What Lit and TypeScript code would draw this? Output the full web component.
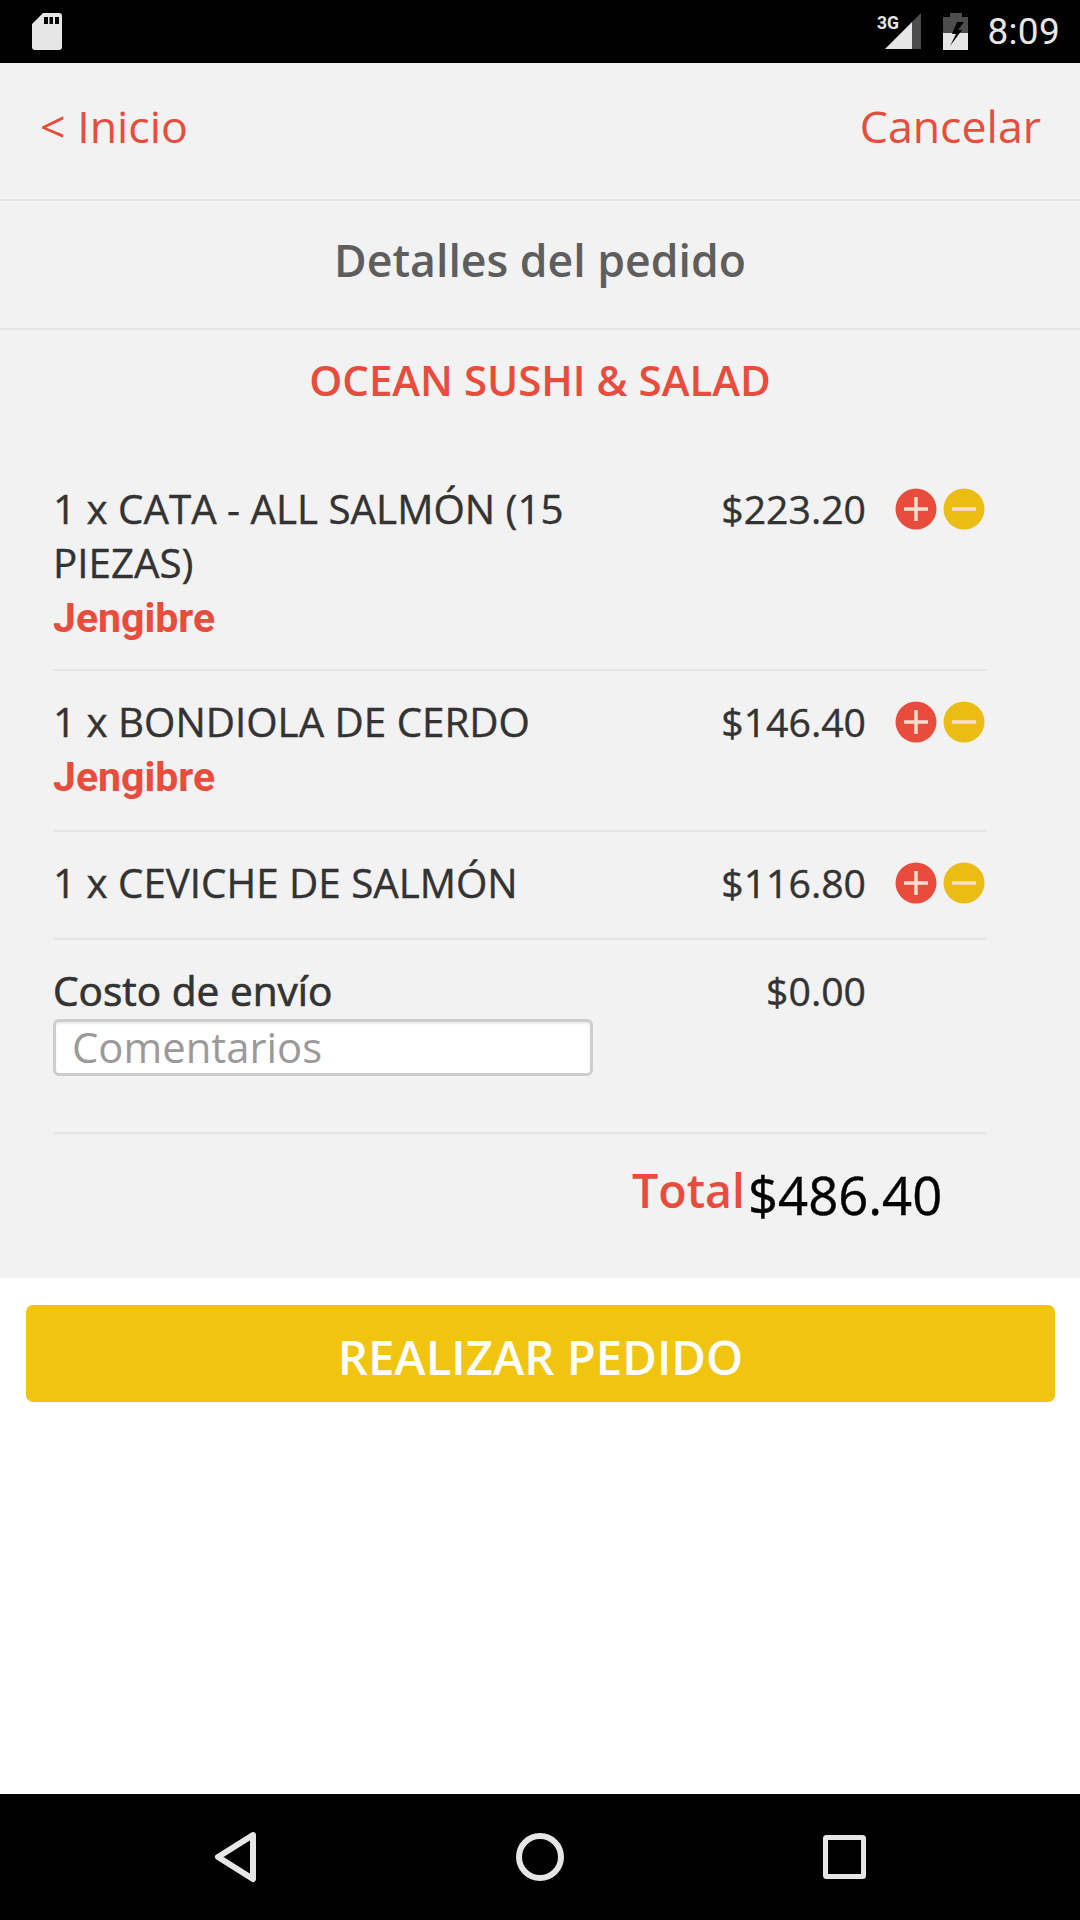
import { LitElement, html, css } from "lit";
import { customElement } from "lit/decorators.js";

@customElement("app-root")
export class AppRoot extends LitElement {
  static styles = css`
    :host { display: block; width: 1080px; height: 1920px; background: #fff; font-family: "Open Sans", "Noto Sans", sans-serif; overflow: hidden; }
    * { box-sizing: border-box; }
    .page { display: flex; flex-direction: column; height: 1920px; }
    .status { height: 63px; background: #000; display: flex; align-items: center; padding: 0 20px 0 32px; color: #e6e6e6; flex: none; }
    .status .sp { flex: 1; }
    .status svg { display: block; flex: none; }
    .time { font-family: Roboto, sans-serif; font-size: 37px; margin-left: 19px; line-height: 63px; letter-spacing: 0.3px; }
    .net { margin-right: 22px; }
    .gray { background: #f2f2f2; height: 1215px; flex: none; display: flex; flex-direction: column; }
    .top { height: 138px; border-bottom: 2px solid #e4e4e4; display: flex; justify-content: space-between; align-items: center; padding: 0 39px 10px 40px; color: #e74c3c; font-size: 44.7px; line-height: 60px; }
    .title { height: 129px; border-bottom: 2px solid #e4e4e4; display: flex; align-items: center; justify-content: center; padding-bottom: 10px; font-size: 44.6px; font-weight: 600; color: #5e5e5e; }
    .rest { text-align: center; font-size: 42px; font-weight: 600; color: #e74c3c; line-height: 52px; margin-top: 24px; }
    .list { margin: 0 93px 0 53px; padding-top: 76px; }
    .row { display: flex; border-bottom: 2px solid #e4e4e4; margin-bottom: 24px; }
    .r1 { padding-bottom: 23px; }
    .r2 { padding-bottom: 25px; }
    .r3 { padding-bottom: 28px; }
    .name { width: 545px; font-size: 40.3px; font-weight: 500; color: #333; line-height: 54px; flex: none; -webkit-text-stroke: 0.4px #333; }
    .price { width: 268px; text-align: right; font-size: 39.2px; font-weight: 500; color: #333; line-height: 54px; flex: none; -webkit-text-stroke: 0.4px #333; }
    .jen { color: #e74c3c; font-weight: 700; font-size: 41px; line-height: 56px; font-family: Roboto, sans-serif; -webkit-text-stroke: 0; }
    .btns { display: flex; margin-left: 29px; height: 42px; margin-top: 6px; gap: 6px; flex: none; }
    .btns svg { display: block; filter: blur(0.5px); }
    .ship { height: 170px; margin-bottom: 0; }
    .cost { font-size: 40.6px; -webkit-text-stroke: 0.7px #333; }
    .input { width: 540px; height: 57px; border: 3px solid #cdcdcd; border-radius: 6px; background: #fff; color: #9a9a9a; font-size: 41.8px; line-height: 50px; padding-left: 16px; margin-top: 1px; box-shadow: inset 0 2px 2px #eee; font-weight: 400; -webkit-text-stroke: 0; }
    .total { display: flex; align-items: baseline; margin-top: 18px; padding-left: 579px; }
    .tl { font-size: 46.5px; font-weight: 600; color: #e74c3c; }
    .tv { font-size: 52.6px; font-weight: 500; color: #000; position: relative; top: 7px; margin-left: 3px; -webkit-text-stroke: 0.4px #000; }
    .cta { margin: 27px 25px 0 26px; height: 97px; background: #f1c40f; border-radius: 7px; color: #fff; font-size: 47.3px; font-weight: 600; display: flex; align-items: center; justify-content: center; flex: none; }
    .cta span { position: relative; top: 3px; }
    .fill { flex: 1; }
    .nav { height: 126px; background: #000; flex: none; display: block; width: 1080px; }
  `;

  btn(bg: string, plus: boolean) {
    return html`<svg width="42" height="42" viewBox="0 0 42 42">
      <circle cx="21" cy="21" r="20.5" fill=${bg}></circle>
      <path d=${plus ? "M9 21H33M21 9V33" : "M9 21H33"} stroke="#f8ddd0" stroke-width="3.5" fill="none"></path>
    </svg>`;
  }

  row(cls: string, name: string, price: string, extra: boolean) {
    return html`<div class="row ${cls}">
      <div class="name">${name}${extra ? html`<div class="jen">Jengibre</div>` : ""}</div>
      <div class="price">${price}</div>
      <div class="btns">${this.btn("#e74c3c", true)}${this.btn("#ebbc14", false)}</div>
    </div>`;
  }

  render() {
    return html`<div class="page">
      <div class="status">
        <svg width="30" height="37" viewBox="0 0 30 37">
          <path fill-rule="evenodd" fill="#e6e6e6" d="M11 0H27a3 3 0 0 1 3 3V34a3 3 0 0 1-3 3H3a3 3 0 0 1-3-3V11Z M12 4v7h4V4Z M17.5 4v7h3.5V4Z M23 4v7h4V4Z"></path>
        </svg>
        <div class="sp"></div>
        <svg class="net" width="44" height="63" viewBox="0 -13 44 63">
          <path fill="#e6e6e6" d="M8 36 L35 9 V36 Z"></path>
          <path fill="#4d4d4d" d="M35 9 L44 0 V36 H35 Z"></path>
          <text x="0" y="16" textLength="22" lengthAdjust="spacingAndGlyphs" font-family="Roboto, sans-serif" font-weight="700" font-size="19" fill="#e6e6e6">3G</text>
        </svg>
        <svg width="25" height="37" viewBox="0 0 25 37">
          <path fill="#4d4d4d" d="M7 0H19V4H25V20H0V4H7Z"></path>
          <path fill="#e6e6e6" d="M0 20H25V37H0Z"></path>
          <path fill="#000" d="M14 9 L9 21 H13 L7 33 L19 17 H15 L21 9Z"></path>
        </svg>
        <span class="time">8:09</span>
      </div>
      <div class="gray">
        <div class="top"><span>&lt; Inicio</span><span>Cancelar</span></div>
        <div class="title">Detalles del pedido</div>
        <div class="rest">OCEAN SUSHI &amp; SALAD</div>
        <div class="list">
          ${this.row("r1", "1 x CATA - ALL SALMÓN (15 PIEZAS)", "$223.20", true)}
          ${this.row("r2", "1 x BONDIOLA DE CERDO", "$146.40", true)}
          ${this.row("r3", "1 x CEVICHE DE SALMÓN", "$116.80", false)}
          <div class="row ship">
            <div class="name cost">Costo de envío<div class="input">Comentarios</div></div>
            <div class="price">$0.00</div>
          </div>
          <div class="total"><span class="tl">Total</span><span class="tv">$486.40</span></div>
        </div>
      </div>
      <div class="cta"><span>REALIZAR PEDIDO</span></div>
      <div class="fill"></div>
      <svg class="nav" viewBox="0 0 1080 126">
        <path d="M253 41 L218 63 L253 85 Z" fill="none" stroke="#e6e6e6" stroke-width="6" stroke-linejoin="round"></path>
        <circle cx="540" cy="63" r="21" fill="none" stroke="#e6e6e6" stroke-width="6"></circle>
        <rect x="825.5" y="43.5" width="38" height="39" rx="1" fill="none" stroke="#e6e6e6" stroke-width="5"></rect>
      </svg>
    </div>`;
  }
}
